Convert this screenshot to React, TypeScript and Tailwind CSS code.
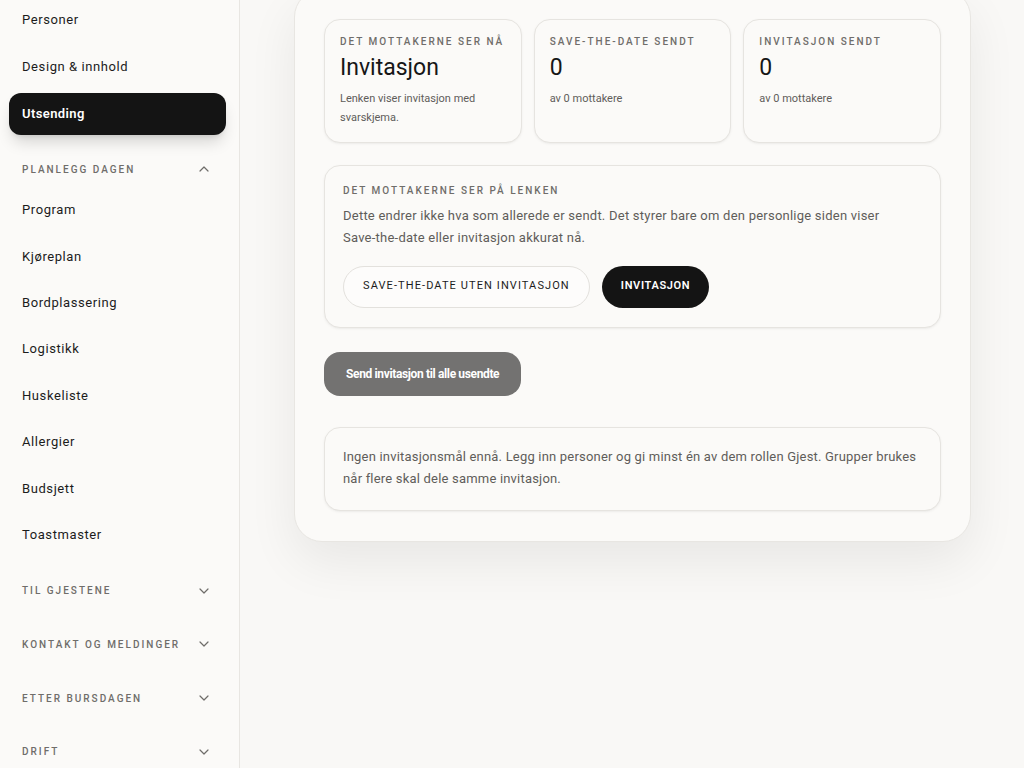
import React from 'react';
import { ChevronDown, ChevronUp } from 'lucide-react';

const topLinks = ['Personer', 'Design & innhold', 'Utsending'];
const planLinks = ['Program', 'Kjøreplan', 'Bordplassering', 'Logistikk', 'Huskeliste', 'Allergier', 'Budsjett', 'Toastmaster'];
const closedGroups = ['Til gjestene', 'Kontakt og meldinger', 'Etter bursdagen', 'Drift'];

const NavLink = ({ label, active }: { label: string; active?: boolean }) => (
  <div
    className={
      active
        ? 'flex h-[42px] items-center rounded-xl bg-[#141414] px-[13px] text-[13px] font-semibold tracking-[0.03em] text-white shadow-lg shadow-black/15'
        : 'flex h-[42px] items-center px-[13px] text-[13px] font-normal tracking-[0.045em] text-[#1c1c1c]'
    }
  >
    {label}
  </div>
);

const GroupHeader = ({ label, open }: { label: string; open?: boolean }) => (
  <div className="flex h-[38px] items-center justify-between pl-[13px] pr-[14px] text-[10px] font-medium uppercase tracking-[0.2em] text-[#6f6d6a]">
    {label}
    {open ? <ChevronUp className="h-4 w-4" strokeWidth={1.8} /> : <ChevronDown className="h-4 w-4" strokeWidth={1.8} />}
  </div>
);

const StatCard = ({ label, value, note }: { label: string; value: string; note: string }) => (
  <div className="rounded-2xl border border-[#e6e4e0] bg-[#fbfaf8] px-[15px] pb-[15px] pt-[14px] shadow-sm shadow-black/5">
    <div className="text-[10px] font-medium uppercase leading-[15px] tracking-[0.2em] text-[#6f6d6a]">{label}</div>
    <div className="mt-[4px] text-[23px] leading-[30px] text-[#161616]">{value}</div>
    <p className="mt-[5.5px] text-[11px] leading-[19px] text-[#5f5d5a]">{note}</p>
  </div>
);

export default function App() {
  return (
    <div className="flex min-h-[768px] bg-[#f9f8f6] font-['Roboto',sans-serif] text-[#161616]">
      <aside className="h-[768px] w-[240px] shrink-0 overflow-hidden border-r border-[#e8e6e2] bg-[#fbfaf8] pl-[9px] pr-[13px]">
        <div className="-mt-px flex flex-col gap-[5px]">
          {topLinks.map((l) => (
            <NavLink key={l} label={l} active={l === 'Utsending'} />
          ))}
        </div>
        <div className="mt-[15px]">
          <GroupHeader label="Planlegg dagen" open />
          <div className="mt-px flex flex-col gap-[4.4px]">
            {planLinks.map((l) => (
              <NavLink key={l} label={l} />
            ))}
          </div>
        </div>
        <div className="mt-[16px] flex flex-col gap-[15.7px]">
          {closedGroups.map((g) => (
            <GroupHeader key={g} label={g} />
          ))}
        </div>
      </aside>

      <main className="flex-1 pl-[54px] pr-[53px]">
        <div className="-mt-[11px] rounded-[28px] border border-[#e8e6e2] bg-[#fbfaf8] px-[29px] pb-[30px] pt-[29px] shadow-[0_20px_50px_rgba(0,0,0,0.07)]">
          <div className="grid grid-cols-3 gap-3">
            <StatCard label="Det mottakerne ser nå" value="Invitasjon" note="Lenken viser invitasjon med svarskjema." />
            <StatCard label="Save-the-date sendt" value="0" note="av 0 mottakere" />
            <StatCard label="Invitasjon sendt" value="0" note="av 0 mottakere" />
          </div>

          <section className="mt-[22px] rounded-2xl border border-[#e6e4e0] bg-[#fbfaf8] px-[18px] pb-[19px] pt-[17.5px] shadow-sm shadow-black/5">
            <div className="text-[10px] font-medium uppercase leading-[15px] tracking-[0.2em] text-[#6f6d6a]">Det mottakerne ser på lenken</div>
            <p className="mt-[6.5px] max-w-[550px] text-[13px] leading-[22px] tracking-[0.018em] text-[#5f5d5a]">
              Dette endrer ikke hva som allerede er sendt. Det styrer bare om den personlige siden viser Save-the-date eller invitasjon akkurat nå.
            </p>
            <div className="mt-[17px] flex gap-3">
              <button className="h-[42px] rounded-full border border-[#e3e1dd] bg-[#fdfcfb] px-[19px] text-[11px] font-normal uppercase tracking-[0.1em] text-[#1c1c1c]">
                Save-the-date uten invitasjon
              </button>
              <button className="h-[42px] rounded-full bg-[#141414] px-[19px] text-[11px] font-semibold uppercase tracking-[0.06em] text-white">
                Invitasjon
              </button>
            </div>
          </section>

          <button className="mt-[24px] h-[44px] rounded-2xl bg-[#737271] px-[22px] text-[12px] font-bold tracking-[-0.03em] text-white">
            Send invitasjon til alle usendte
          </button>

          <div className="mt-[31px] rounded-2xl border border-[#e6e4e0] bg-[#fbfaf8] px-[18px] pb-[20px] pt-[18px] shadow-sm shadow-black/5">
            <p className="text-[13px] leading-[22px] tracking-[0.015em] text-[#5f5d5a]">
              Ingen invitasjonsmål ennå. Legg inn personer og gi minst én av dem rollen Gjest. Grupper brukes når flere skal dele samme invitasjon.
            </p>
          </div>
        </div>
      </main>
    </div>
  );
}
